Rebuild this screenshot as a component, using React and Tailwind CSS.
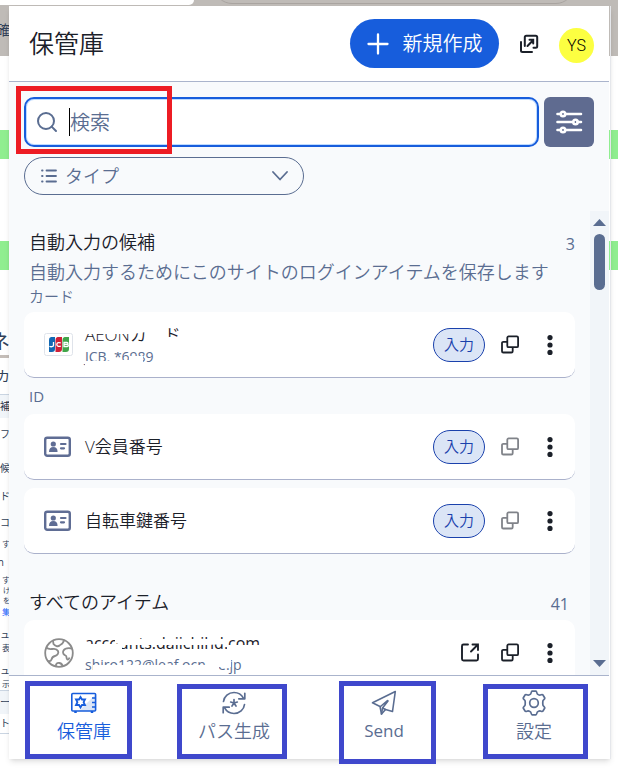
import React from 'react';
import { Search } from 'lucide-react';

const pageLines = [
  { h: 'h-[60px]', text: '確', cls: 'text-black text-sm font-normal' },
  { h: 'h-[268px]', text: '', cls: '' },
  { h: 'h-[30px]', text: 'ネ', cls: 'text-black text-xl font-bold border-b-3 border-[#c4bdb8]' },
  { h: 'h-[36px]', text: 'カ', cls: 'text-black text-sm font-bold' },
  { h: 'h-[24px]', text: '補', cls: 'text-slate-800 text-[10px] font-bold bg-slate-100 border-t border-slate-300' },
  { h: 'h-[32px]', text: 'フ', cls: 'text-[10px]' },
  { h: 'h-[36px]', text: '候', cls: 'text-[10px]' },
  { h: 'h-[20px]', text: 'ド', cls: 'text-[10px]' },
  { h: 'h-[32px]', text: 'コ', cls: 'text-[10px]' },
  { h: 'h-[12px]', text: 'す', cls: 'text-[8px]' },
  { h: 'h-[24px]', text: 'n', cls: 'text-[10px] pr-1.5' },
  { h: 'h-[12px]', text: 'す', cls: 'text-[8px]' },
  { h: 'h-[10px]', text: 'け', cls: 'text-[7px] text-slate-500' },
  { h: 'h-[10px]', text: 'を', cls: 'text-[7px] text-slate-500' },
  { h: 'h-[12px]', text: '集', cls: 'text-[8px] font-bold text-blue-600!' },
  { h: 'h-[24px]', text: 'ュ', cls: 'text-[10px] pt-2' },
  { h: 'h-[12px]', text: '表', cls: 'text-[8px]' },
  { h: 'h-[24px]', text: 'ュ', cls: 'text-[10px] pt-2' },
  { h: 'h-[12px]', text: '示', cls: 'text-[8px]' },
  { h: 'h-[24px]', text: 'ー', cls: 'text-[10px] font-bold bg-slate-100 border-t border-slate-300' },
  { h: 'h-[20px]', text: 'ト', cls: 'text-[10px] border-b border-slate-300' },
];

// Page behind the popup
const PageBehind = () => (
  <div className="absolute inset-0 overflow-hidden bg-white" aria-hidden="true">
    <div className="absolute inset-x-0 top-0 h-[56px] bg-[#bfbbb7]"></div>
    <div className="absolute inset-x-0 top-[130px] h-[29px] bg-[#90ee90]"></div>
    <div className="absolute inset-x-0 top-[241px] h-[29px] bg-[#90ee90]"></div>
    <div className="relative w-2.5">
      {pageLines.map((line, idx) => (
        <div key={idx} className={`flex items-center justify-end whitespace-nowrap text-slate-700 font-normal ${line.h} ${line.cls}`}>
          {line.text}
        </div>
      ))}
    </div>
    <div className="absolute left-0 top-0 w-[194px] h-[5px] bg-white rounded-br-full"></div>
    <div className="absolute left-[214px] -top-8 w-[360px] h-9 rounded-full border border-[#a9a4a0]"></div>
  </div>
);

const PlusIcon = () => (
  <svg width="22" height="22" viewBox="0 0 22 22" fill="none" stroke="currentColor" strokeWidth="2.300" strokeLinecap="round">
    <path d="M11 1.500v19M1.500 11h19" />
  </svg>
);

const ChevronIcon = () => (
  <svg width="16" height="10" viewBox="0 0 16 10" fill="none" stroke="currentColor" strokeWidth="1.800" strokeLinecap="round" strokeLinejoin="round">
    <path d="M1 1l7 7.500L15 1" />
  </svg>
);

const ListIcon = () => (
  <svg width="16" height="14" viewBox="0 0 16 14" fill="none" stroke="currentColor" strokeWidth="1.800" strokeLinecap="round">
    <path d="M1 1.500h.6M1 7h.6M1 12.500h.6M5.500 1.500H15M5.500 7H15M5.500 12.500H15" />
  </svg>
);

const CopyIcon = () => (
  <svg width="20" height="20" viewBox="0 0 20 20" fill="none" stroke="currentColor" strokeWidth="1.800">
    <rect x="7.300" y="1.400" width="10.800" height="10.800" rx="1.300" />
    <path d="M7.300 6.800H3.300a1.300 1.300 0 0 0-1.300 1.300v8.100a1.300 1.300 0 0 0 1.300 1.300h8.100a1.300 1.300 0 0 0 1.300-1.300V12.200" />
  </svg>
);

const PopoutIcon = () => (
  <svg width="20" height="20" viewBox="0 0 20 20" fill="none" stroke="currentColor" strokeWidth="2" strokeLinecap="round">
    <path d="M5.800 12V3.300A1.500 1.500 0 0 1 7.300 1.800h9.400a1.500 1.500 0 0 1 1.500 1.500v8.900a1.500 1.500 0 0 1-1.500 1.500H14.500" />
    <path d="M2 8v8.500A1.500 1.500 0 0 0 3.500 18H13" />
    <path d="M8.500 12l5.300-5.500M10.500 5.800h3.700v3.700" />
  </svg>
);

const LaunchIcon = () => (
  <svg width="20" height="20" viewBox="0 0 20 20" fill="none" stroke="currentColor" strokeWidth="1.900" strokeLinecap="round">
    <path d="M8 1.500H3.500A1.500 1.500 0 0 0 2 3v13a1.500 1.500 0 0 0 1.500 1.500h13A1.500 1.500 0 0 0 18 16v-4.500" />
    <path d="M11 8.500l7-7M12.500 1.500H18V7" />
  </svg>
);

const DotsIcon = () => (
  <svg width="20" height="20" viewBox="0 0 20 20" fill="currentColor">
    <circle cx="10" cy="2.600" r="2.600" />
    <circle cx="10" cy="10" r="2.600" />
    <circle cx="10" cy="17.400" r="2.600" />
  </svg>
);

const SlidersIcon = () => (
  <svg width="28" height="26" viewBox="0 0 28 26" fill="none" stroke="currentColor" strokeWidth="2.600" strokeLinecap="round">
    <path d="M2.500 5h3M10.500 5h15.500M2.500 13h15M22.500 13h3.500M2.500 21h3M10.500 21h15.500" />
    <circle cx="8" cy="5" r="2.200" />
    <circle cx="20.500" cy="13" r="2.200" />
    <circle cx="8" cy="21" r="2.200" />
  </svg>
);

const JcbIcon = () => (
  <svg width="29" height="24" viewBox="0 0 29 24">
    <rect x="0.500" y="0.500" width="28" height="22" rx="2" fill="#fff" stroke="#dfe3ea" />
    <path d="M7 4h4v12a3 3 0 0 1-3 3H5V7a3 3 0 0 1 2-3z" fill="#1268b3" />
    <path d="M13.500 4H18v12a3 3 0 0 1-3 3h-3.500V7a3 3 0 0 1 2-3z" fill="#cf2038" />
    <path d="M20.500 4H25v12a3 3 0 0 1-3 3h-3.500V7a3 3 0 0 1 2-3z" fill="#40a549" />
    <path d="M9.500 9v3.300c0 1.800-3 1.700-4 .9M16.800 10c-1.500-.8-4-.6-4 1.500s2.500 2.300 4 1.500M20 9.500h3c1.300 0 1.300 1.800 0 1.800h-3h3.200c1.500 0 1.500 2.200 0 2.200H20z" fill="none" stroke="#fff" strokeWidth="1.300" />
  </svg>
);

const IdIcon = () => (
  <svg width="28" height="22" viewBox="0 0 28 22" fill="none" stroke="#5f6d94">
    <rect x="1.200" y="1.700" width="24.600" height="18.100" rx="2" strokeWidth="2.400" />
    <circle cx="9.300" cy="8" r="2.600" fill="#5f6d94" stroke="none" />
    <path d="M5 16c0-3.500 1.500-5 4.300-5s4.300 1.500 4.300 5z" fill="#5f6d94" stroke="none" />
    <path d="M17 8h4.500M17 12.300h3" strokeWidth="2.200" strokeLinecap="round" />
  </svg>
);

const GlobeIcon = () => (
  <svg width="30" height="30" viewBox="0 0 30 30" fill="none" stroke="#8b8b8b" strokeWidth="1.800" strokeLinejoin="round">
    <circle cx="15" cy="15" r="13.800" />
    <path d="M9 2.800l.5 3.200c1.500 2 4.500 3 6 1.500 1.500-1 3-1.500 3.500-3l1-2M2 9.500c2 1.500 3.500 2 6 1.500s5 0 6 2-.5 4.500-3 5-3 1.500-3.500 3.500-2 2-4 1.500M28 10.500c-3-.5-7-.5-8.500 2s.5 4.500 2 5 .5 2 1.500 3.500 2 0 2.500-1.500M12 28.500c-.5-2.500 1-4 3.500-3.500s3 1.500 3 3.500" />
  </svg>
);

const VaultIcon = () => (
  <svg width="28" height="22" viewBox="0 0 28 22" fill="none" stroke="#175ddc" strokeWidth="1.600">
    <path d="M9 19 25 3v16z" fill="#dbe5f6" stroke="none" />
    <rect x="1.800" y="1.500" width="23.800" height="17.500" rx="1" />
    <path d="M5.500 19v2M22 19v2" strokeWidth="2.500" />
    <path d="M10.500 5l1.500 2.500H15L13.600 10.200 15 13h-3l-1.500 2.500L9 13H6l1.400-2.800L6 7.500h3z" strokeWidth="1.800" />
    <path d="M22 6h3.500M22 10.500h3.500M22 15h3.500" />
  </svg>
);

const GeneratorIcon = () => (
  <svg width="24" height="24" viewBox="0 0 24 24" fill="none" stroke="currentColor" strokeWidth="1.700" strokeLinecap="round" strokeLinejoin="round">
    <path d="M1.500 10.500C2 5.500 6.500 1.500 12 1.500c4 0 7.500 2 9.500 5.800M22.800 2.300V7.800h-6" />
    <path d="M22.500 13.500C22 18.500 17.500 22.500 12 22.500c-4 0-7.500-2-9.500-5.800M1.200 21.700v-5.500h6" />
    <path d="M12 8.500V12M12 12l3.300-1M12 12l2 3M12 12l-2 3M12 12l-3.300-1" />
  </svg>
);

const SendIcon = () => (
  <svg width="26" height="26" viewBox="0 0 26 26" fill="none" stroke="currentColor" strokeWidth="1.600" strokeLinecap="round" strokeLinejoin="round">
    <path d="M24.300 1.500 1.500 12.800l7.500 3.700 1.500 7.500 4-4.500 7 2z" />
    <path d="M16.500 10.500 9.500 16.500M17 11l-5.500 7 3 1.500M11.500 18l-1 6" />
  </svg>
);

const SettingsIcon = () => (
  <svg width="26" height="26" viewBox="0 0 26 26" fill="none" stroke="currentColor" strokeWidth="1.700" strokeLinejoin="round">
    <path d="M11 1.200h4c.8 0 .8 2.600 1.600 3 .8.500 1.500 1 2.300 1 .9 0 2.300-1.200 2.900-.5l2 3.300c.4.900-1.700 2-1.900 2.900-.2 1.400-.2 2.800 0 4.200.200.900 2.300 2 1.900 2.900l-2 3.300c-.6.700-2-.5-2.900-.5-.8 0-1.500.5-2.300 1-.8.400-.8 3-1.600 3h-4c-.8 0-.8-2.600-1.600-3-.8-.5-1.500-1-2.300-1-.9 0-2.300 1.200-2.900.5l-2-3.300c-.4-.9 1.700-2 1.900-2.900.2-1.400.2-2.800 0-4.200C3.900 10 1.800 8.900 2.200 8l2-3.300c.6-.7 2 .5 2.900.5.8 0 1.500-.5 2.300-1 .8-.4.800-3 1.600-3z" />
    <circle cx="13" cy="13" r="4.300" />
  </svg>
);

const ItemCard = ({ icon, title, subtitle, fill, launch, dimCopy, mask }) => (
  <li className="h-[66px] bg-white rounded-[10px] border-b border-[#aab1cb] pl-5 pr-[15px] flex items-center">
    <div className="w-[41px] shrink-0">{icon}</div>
    <div className="relative flex-1 min-w-0 whitespace-nowrap">
      <p className={`leading-6 text-[#1b2029] ${launch ? 'text-base font-normal' : 'text-[17px]'}`}>{title}</p>
      {subtitle && <p className="text-sm leading-5 font-normal text-[#5a6d91]">{subtitle}</p>}
      {mask}
    </div>
    <div className="flex items-center">
      {fill && (
        <button className="w-[52px] h-[34px] mr-[15px] rounded-full border border-[#1a41ac] bg-[#dbe5f6] text-[#1a41ac] text-[15px]">入力</button>
      )}
      {launch && (
        <button className="mr-5 text-[#1b2029]" aria-label="開く"><LaunchIcon /></button>
      )}
      <button className={`mr-5 ${dimCopy ? 'text-[#808389]' : 'text-[#1b2029]'}`} aria-label="コピー"><CopyIcon /></button>
      <button className="text-[#1b2029]" aria-label="その他"><DotsIcon /></button>
    </div>
  </li>
);

// White brush strokes that hide the account details
const CardMask = () => (
  <svg className="absolute left-0 top-0" width="110" height="46" viewBox="0 0 110 46" fill="#fff">
    <path d="M0 0h80v6H63v18H61V9l-13 2H0z" />
    <path d="M63 0h18v24H63zM80 14h24v10H80z" />
    <path d="M0 26h60v3H0zM0 38h54v7H0zM29 37h17v8H29zM44 33h14v11H44z" />
  </svg>
);

const LoginMask = () => (
  <svg className="absolute left-0 top-0" width="190" height="46" viewBox="0 0 190 46" fill="#fff">
    <path d="M0 13h37v11H0zM30 8h112v5l-20 1H37l-7-2zM142 14h42v10h-42z" />
    <path d="M8 34h116v12H8zM122 24h24v12h-24zM122 34h12v12h-12z" />
  </svg>
);

const tabs = [
  { label: '保管庫', icon: <VaultIcon />, active: true, text: 'text-lg', box: 'left-4 right-[27px] top-[5px] bottom-0' },
  { label: 'パス生成', icon: <GeneratorIcon />, text: 'text-lg', box: 'left-[18px] right-[22px] top-2 bottom-0' },
  { label: 'Send', icon: <SendIcon />, text: 'text-[17px] font-normal', box: 'left-[30px] right-[23px] top-[5px] -bottom-[5px]' },
  { label: '設定', icon: <SettingsIcon />, text: 'text-lg', box: 'left-6 right-[21px] top-2 bottom-0' },
];

const App = () => {
  return (
    <div className="relative h-screen pt-1.5 pb-2.5 pl-[9px] pr-[7px] font-[350] font-['Open_Sans','Noto_Sans_CJK_JP',sans-serif]">
      <PageBehind />

      <div className="relative h-full pr-px border-r border-gray-200 shadow-md">
        <main className="h-full flex flex-col bg-[#f8fafc]">
          {/* Header */}
          <header className="h-[76px] shrink-0 bg-white border-b border-[#aab4cc] pl-5 pr-[15px] flex items-center">
            <h1 className="pb-0.5 text-[25px] leading-8 text-[#1b2029] flex-1">保管庫</h1>
            <button className="h-[49px] w-[149px] rounded-full bg-[#175ddc] text-white text-xl flex items-center justify-center gap-3.5">
              <PlusIcon />
              新規作成
            </button>
            <button className="ml-5 text-[#1b2029]" aria-label="ポップアウト"><PopoutIcon /></button>
            <button className="ml-5 mt-1 w-[35px] h-[35px] rounded-full bg-[#fcff41] text-black text-base font-['Roboto',sans-serif]">YS</button>
          </header>

          {/* Search & filter */}
          <div className="shrink-0 px-[15px] pt-[15px] pb-4">
            <div className="relative flex gap-[5px]">
              <label className="flex-1 h-[50px] bg-white border-2 border-[#175ddc] rounded-[10px] ring-1 ring-inset ring-blue-200 flex items-center pl-[9px]">
                <Search className="h-6 w-6 text-[#5a6d91]" strokeWidth={2} />
                <span className="ml-2.5 w-px h-7 bg-black"></span>
                <input type="text" placeholder="検索" aria-label="検索" className="flex-1 min-w-0 pt-0.5 text-xl outline-none bg-transparent placeholder:text-[#5a6d91]" />
              </label>
              <button className="w-[50px] h-[50px] rounded-md bg-[#5f6b90] text-white flex items-center justify-center" aria-label="フィルター">
                <SlidersIcon />
              </button>
              <div className="absolute -left-2 -top-[11px] w-[156px] h-[68px] border-5 border-[#ed1c24] pointer-events-none"></div>
            </div>
            <label className="mt-2.5 w-[280px] h-[38px] rounded-full border border-[#5a6d91] text-[#5a6d91] flex items-center pl-4 pr-[15px]">
              <ListIcon />
              <select aria-label="タイプ" className="appearance-none flex-1 pl-2 text-lg leading-6 bg-transparent outline-none">
                <option>タイプ</option>
              </select>
              <ChevronIcon />
            </label>
          </div>

          {/* Items */}
          <div className="flex-1 min-h-0 flex">
            <div className="flex-1 min-w-0 overflow-hidden px-[15px] pt-[19px]">
              <div className="pl-[5px] flex justify-between">
                <h2 className="text-lg leading-6 text-[#1b2029]">自動入力の候補</h2>
                <span className="text-base leading-7 font-normal text-[#5a6d91]">3</span>
              </div>
              <p className="pl-[5px] text-lg leading-7 text-[#5a6d91] whitespace-nowrap">自動入力するためにこのサイトのログインアイテムを保存します</p>
              <h3 className="pl-[5px] mb-1.5 text-[15px] leading-5 text-[#5a6d91]">カード</h3>
              <ul>
                <ItemCard icon={<JcbIcon />} title="AEONカード" subtitle="JCB, *6989" fill mask={<CardMask />} />
              </ul>
              <h3 className="pl-[5px] mt-2 mb-2 text-[15px] leading-5 text-[#5a6d91] font-normal">ID</h3>
              <ul className="space-y-2">
                <ItemCard icon={<IdIcon />} title="V会員番号" fill dimCopy />
                <ItemCard icon={<IdIcon />} title="自転車鍵番号" fill dimCopy />
              </ul>
              <div className="mt-9 mb-0.5 pl-[5px] pr-1.5 flex justify-between">
                <h2 className="text-lg leading-6 text-[#1b2029]">すべてのアイテム</h2>
                <span className="text-base leading-7 font-normal text-[#5a6d91]">41</span>
              </div>
              <ul>
                <ItemCard icon={<GlobeIcon />} title="accounts.daiichihd.com" subtitle="shiro122@leaf.ocn.ne.jp" launch mask={<LoginMask />} />
              </ul>
            </div>

            {/* Scrollbar */}
            <div className="w-[19px] shrink-0 bg-[#f1f5f9] flex flex-col items-center justify-between py-2">
              <div className="flex flex-col items-center gap-2">
                <svg width="13" height="7" viewBox="0 0 13 7" fill="#5a6d91"><path d="M0 7 6.500 0 13 7z" /></svg>
                <div className="w-[11px] h-14 rounded-full bg-[#5a6d91]"></div>
              </div>
              <svg width="13" height="7" viewBox="0 0 13 7" fill="#5a6d91"><path d="M0 0h13L6.500 7z" /></svg>
            </div>
          </div>

          {/* Bottom tabs */}
          <nav className="h-[84px] shrink-0 bg-white border-t border-[#aab4cc] grid grid-cols-4">
            {tabs.map((tab) => (
              <a
                key={tab.label}
                href="#"
                className={`relative flex flex-col items-center pt-3.5 ${tab.active ? 'text-[#175ddc]' : 'text-[#5a6d91]'}`}
              >
                <span className="h-[26px] flex items-center">{tab.icon}</span>
                <span className={`mt-[3px] leading-6 ${tab.text}`}>{tab.label}</span>
                <span className={`absolute border-5 border-[#3f48cc] ${tab.box}`}></span>
              </a>
            ))}
          </nav>
        </main>
      </div>
    </div>
  );
};

export default App;
